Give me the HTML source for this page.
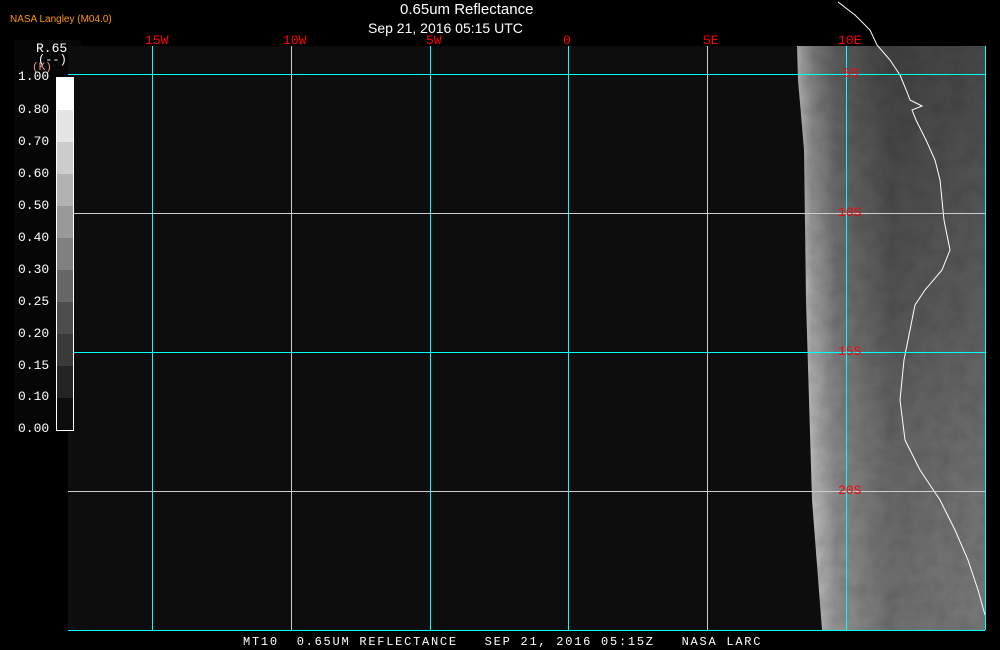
<!DOCTYPE html>
<html><head><style>
body{margin:0;background:#000;width:1000px;height:650px;overflow:hidden;position:relative;font-family:"Liberation Mono",monospace;}
.t{position:absolute;color:#fff;white-space:pre}
.lab{position:absolute;color:#fff;font-size:13px;left:18px}
.r{position:absolute;color:#f00;font-size:13px;font-family:"Liberation Mono",monospace}
</style></head><body>
<svg width="1000" height="650" style="position:absolute;left:0;top:0">
<defs>
<linearGradient id="g" x1="797" x2="985" y1="0" y2="0" gradientUnits="userSpaceOnUse">
<stop offset="0" stop-color="#fff"/><stop offset="0.08" stop-color="#bbb"/><stop offset="0.2" stop-color="#888"/><stop offset="0.5" stop-color="#606060"/><stop offset="0.75" stop-color="#666"/><stop offset="1" stop-color="#6c6c6c"/>
</linearGradient>
<linearGradient id="v" x1="0" x2="0" y1="46" y2="630" gradientUnits="userSpaceOnUse">
<stop offset="0" stop-color="#000" stop-opacity="0.35"/><stop offset="0.45" stop-color="#000" stop-opacity="0.15"/><stop offset="1" stop-color="#fff" stop-opacity="0.08"/>
</linearGradient>
<filter id="n" x="0" y="0" width="100%" height="100%">
<feTurbulence type="fractalNoise" baseFrequency="0.06" numOctaves="3" seed="4"/>
<feColorMatrix type="matrix" values="0 0 0 0 0.5  0 0 0 0 0.5  0 0 0 0 0.5  0 0 0 1.4 -0.45"/>
</filter>
<clipPath id="c"><polygon points="797,46 985,46 985,630 822,630 812,500 806,300 804,150 798,80"/></clipPath>
</defs>
<rect x="14" y="40" width="67" height="392" fill="#060606"/>
<rect x="68" y="46" width="917" height="585" fill="#0d0d0d"/>
<g clip-path="url(#c)">
<rect x="790" y="46" width="200" height="585" fill="url(#g)"/>
<rect x="790" y="46" width="200" height="585" fill="url(#v)"/>
<rect x="790" y="46" width="200" height="585" filter="url(#n)" opacity="0.5" style="mix-blend-mode:multiply"/>
</g>
<path d="M838,2 L855,15 L870,30 L877,45 L890,60 L900,75 L907,92 L910,100 L922,106 L912,110 L916,120 L926,140 L935,160 L940,180 L944,220 L950,250 L942,270 L925,290 L915,305 L910,330 L904,360 L900,400 L905,440 L920,470 L940,500 L955,530 L968,560 L978,590 L985,615" fill="none" stroke="#fff" stroke-width="1"/>
<g stroke="#0ff" stroke-width="1" fill="none">
<line x1="68" y1="74.5" x2="985" y2="74.5"/><line x1="68" y1="352.5" x2="985" y2="352.5"/><line x1="68" y1="491.5" x2="985" y2="491.5" stroke="#ccc"/><line x1="68" y1="630.5" x2="985" y2="630.5"/>
<line x1="152.5" y1="46" x2="152.5" y2="630"/><line x1="430.5" y1="46" x2="430.5" y2="630"/><line x1="568.5" y1="46" x2="568.5" y2="630"/><line x1="846.5" y1="46" x2="846.5" y2="630"/><line x1="985.5" y1="46" x2="985.5" y2="630"/>
</g>
<g stroke="#ccc" stroke-width="1">
<line x1="68" y1="213.5" x2="985" y2="213.5"/><line x1="291.5" y1="46" x2="291.5" y2="630"/><line x1="707.5" y1="46" x2="707.5" y2="630"/>
</g>
<g>
<rect x="56" y="77" width="18" height="33" fill="#fff"/>
<rect x="56" y="110" width="18" height="32" fill="#e5e5e5"/>
<rect x="56" y="142" width="18" height="32" fill="#cccccc"/>
<rect x="56" y="174" width="18" height="32" fill="#b2b2b2"/>
<rect x="56" y="206" width="18" height="32" fill="#999"/>
<rect x="56" y="238" width="18" height="32" fill="#808080"/>
<rect x="56" y="270" width="18" height="32" fill="#666"/>
<rect x="56" y="302" width="18" height="32" fill="#4d4d4d"/>
<rect x="56" y="334" width="18" height="32" fill="#3a3a3a"/>
<rect x="56" y="366" width="18" height="32" fill="#242424"/>
<rect x="56" y="398" width="18" height="32" fill="#0d0d0d"/>
<rect x="56.5" y="77.5" width="17" height="353" fill="none" stroke="#fff"/>
</g>
</svg>
<div class="t" style="left:10px;top:14px;color:#f90;font-size:10px;font-family:'Liberation Sans',sans-serif">NASA Langley (M04.0)</div>
<div class="t" style="left:400px;top:1px;font-size:15px;font-family:'Liberation Sans',sans-serif">0.65um Reflectance</div>
<div class="t" style="left:368px;top:20px;font-size:14px;font-family:'Liberation Sans',sans-serif">Sep 21, 2016 05:15 UTC</div>
<div class="t" style="left:36px;top:41px;font-size:13px">R.65</div>
<div class="t" style="left:38px;top:53px;font-size:12px">(--)</div>
<div class="t" style="left:32px;top:62px;font-size:11px;color:#e98">(K)</div>
<div class="lab" style="top:69px">1.00</div>
<div class="lab" style="top:102px">0.80</div>
<div class="lab" style="top:134px">0.70</div>
<div class="lab" style="top:166px">0.60</div>
<div class="lab" style="top:198px">0.50</div>
<div class="lab" style="top:230px">0.40</div>
<div class="lab" style="top:262px">0.30</div>
<div class="lab" style="top:294px">0.25</div>
<div class="lab" style="top:326px">0.20</div>
<div class="lab" style="top:358px">0.15</div>
<div class="lab" style="top:389px">0.10</div>
<div class="lab" style="top:421px">0.00</div>
<div class="r" style="left:145px;top:33px">15W</div>
<div class="r" style="left:283px;top:33px">10W</div>
<div class="r" style="left:426px;top:33px">5W</div>
<div class="r" style="left:563px;top:33px">0</div>
<div class="r" style="left:703px;top:33px">5E</div>
<div class="r" style="left:838px;top:33px">10E</div>
<div class="r" style="left:843px;top:66px">5S</div>
<div class="r" style="left:838px;top:205px">10S</div>
<div class="r" style="left:838px;top:344px">15S</div>
<div class="r" style="left:838px;top:483px">20S</div>
<div class="t" style="left:243px;top:635px;font-size:12px;letter-spacing:1.75px">MT10  0.65UM REFLECTANCE   SEP 21, 2016 05:15Z   NASA LARC</div>
</body></html>
